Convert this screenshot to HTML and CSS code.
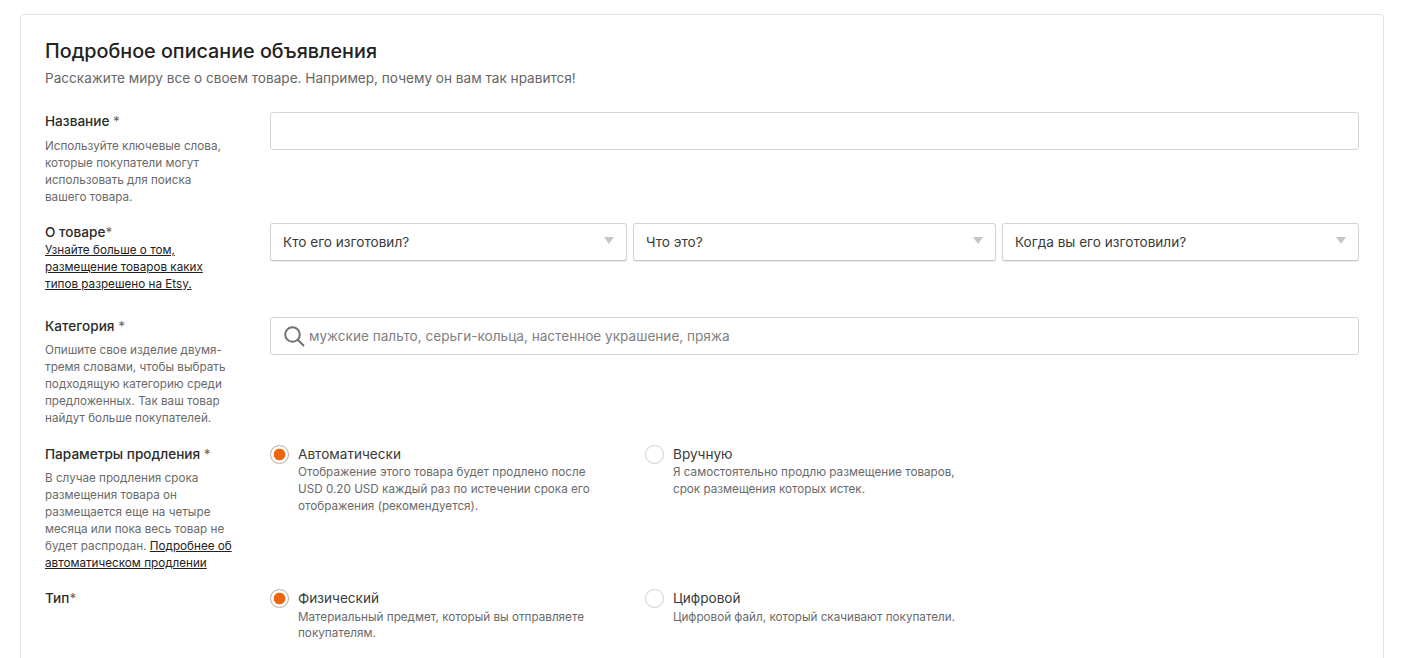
FILE: index.html
```html
<!DOCTYPE html>
<html lang="ru">
<head>
<meta charset="utf-8">
<title>Подробное описание объявления</title>
<link rel="stylesheet" href="styles.css">
</head>
<body>
<main class="card">
  <header class="head">
    <h1 class="title">Подробное описание объявления</h1>
    <p class="subtitle">Расскажите миру все о своем товаре. Например, почему он вам так нравится!</p>
  </header>

  <section class="row row-name">
    <div class="side">
      <div class="label label-gap-name">Название <span class="star">*</span></div>
      <p class="help">Используйте ключевые слова,<br>которые покупатели могут<br>использовать для поиска<br>вашего товара.</p>
    </div>
    <div class="main"><div class="field"></div></div>
  </section>

  <section class="row row-about">
    <div class="side">
      <div class="label">О товаре<span class="star">*</span></div>
      <p class="help"><a href="#">Узнайте больше о том,<br>размещение товаров каких<br>типов разрешено на Etsy.</a></p>
    </div>
    <div class="main selects">
      <div class="field select"><span>Кто его изготовил?</span><i class="arrow"></i></div>
      <div class="field select"><span>Что это?</span><i class="arrow"></i></div>
      <div class="field select"><span>Когда вы его изготовили?</span><i class="arrow"></i></div>
    </div>
  </section>

  <section class="row row-category">
    <div class="side">
      <div class="label label-gap">Категория <span class="star">*</span></div>
      <p class="help">Опишите свое изделие двумя-<br>тремя словами, чтобы выбрать<br>подходящую категорию среди<br>предложенных. Так ваш товар<br>найдут больше покупателей.</p>
    </div>
    <div class="main">
      <div class="field search">
        <svg class="search-icon" width="21" height="21" viewBox="0 0 21 21" aria-hidden="true"><circle cx="8.5" cy="8.5" r="7.3" fill="none" stroke="#707070" stroke-width="2"/><path d="M13.8 13.8 20 20" fill="none" stroke="#707070" stroke-width="2"/></svg>
        <span class="placeholder">мужские пальто, серьги-кольца, настенное украшение, пряжа</span>
      </div>
    </div>
  </section>

  <section class="row row-renew">
    <div class="side">
      <div class="label label-gap">Параметры продления <span class="star">*</span></div>
      <p class="help">В случае продления срока<br>размещения товара он<br>размещается еще на четыре<br>месяца или пока весь товар не<br>будет распродан. <a href="#">Подробнее об<br>автоматическом продлении</a></p>
    </div>
    <div class="main radios">
      <div class="radio-item">
        <i class="radio on"></i>
        <div><div class="radio-title">Автоматически</div><p class="help">Отображение этого товара будет продлено после<br>USD 0.20 USD каждый раз по истечении срока его<br>отображения (рекомендуется).</p></div>
      </div>
      <div class="radio-item">
        <i class="radio"></i>
        <div><div class="radio-title">Вручную</div><p class="help">Я самостоятельно продлю размещение товаров,<br>срок размещения которых истек.</p></div>
      </div>
    </div>
  </section>

  <section class="row row-type">
    <div class="side">
      <div class="label">Тип<span class="star">*</span></div>
    </div>
    <div class="main radios">
      <div class="radio-item">
        <i class="radio on"></i>
        <div><div class="radio-title">Физический</div><p class="help help-down">Материальный предмет, который вы отправляете<br>покупателям.</p></div>
      </div>
      <div class="radio-item">
        <i class="radio"></i>
        <div><div class="radio-title">Цифровой</div><p class="help help-down">Цифровой файл, который скачивают покупатели.</p></div>
      </div>
    </div>
  </section>
</main>
</body>
</html>
```

FILE: styles.css
```css
* { box-sizing: border-box; }
html, body { height: 100%; overflow: hidden; }
body {
  margin: 0;
  padding: 14px 17px 0 20px;
  background: #fff;
  color: #222;
  font-family: Inter, "Noto Sans", sans-serif;
}
.card {
  border: 1px solid #e1e1e1;
  border-radius: 4px;
  padding: 24px 24px 0;
  height: 700px;
}
.head { height: 73px; }
.title {
  margin: 0;
  font-size: 19.75px;
  line-height: 25px;
  font-weight: 500;
  color: #222;
}
.subtitle {
  margin: 2px 0 0;
  font-size: 13.6px;
  line-height: 24px;
  color: #666;
}
.row { display: flex; }
.row-name { height: 111px; }
.row-about { height: 94px; }
.row-category { height: 128px; }
.row-renew { height: 144px; }
.side { width: 225px; flex: none; }
.main { flex: 1; min-width: 0; }
.label {
  font-size: 13.6px;
  line-height: 19px;
  font-weight: 500;
  color: #2b2b2b;
}
.label-gap { margin-bottom: 6px; }
.label-gap-name { margin-bottom: 7px; }
.star { font-weight: 400; color: #666; }
.help {
  margin: 0;
  font-size: 11.7px;
  line-height: 17px;
  color: #6a6a6a;
  white-space: nowrap;
}
.help a { color: #222; text-decoration: underline; }
.help-down { margin-top: 1px; line-height: 16px; }
.field {
  height: 38px;
  border: 1px solid #d4d4d4;
  border-radius: 3px;
  background: #fff;
  font-size: 13.6px;
  color: #3a3a3a;
}
.selects { display: grid; grid-template-columns: 357px 363px 357px; column-gap: 6px; }
.select {
  display: flex;
  align-items: center;
  justify-content: space-between;
  padding: 0 12px;
  border-bottom-color: #c4c4c4;
  box-shadow: 0 1px 1px rgba(0,0,0,.08);
}
.arrow {
  width: 0;
  height: 0;
  margin-top: -4px;
  border-left: 5px solid transparent;
  border-right: 5px solid transparent;
  border-top: 7px solid #c6c6c6;
}
.search { display: flex; align-items: center; padding-left: 13px; }
.search-icon { flex: none; }
.placeholder { margin-left: 4px; color: #808080; }
.radios { display: flex; }
.radio-item { width: 375px; display: flex; gap: 9px; flex: none; }
.radio {
  width: 19px;
  height: 19px;
  flex: none;
  border: 1px solid #cfcfcf;
  border-radius: 50%;
  background: #fff;
}
.radio.on {
  border-color: #b9a99c;
  background: radial-gradient(circle, #ee6410 0 5.5px, #fff 6.2px);
}
.radio-title {
  font-size: 13.6px;
  line-height: 19px;
  color: #3a3a3a;
}
```
